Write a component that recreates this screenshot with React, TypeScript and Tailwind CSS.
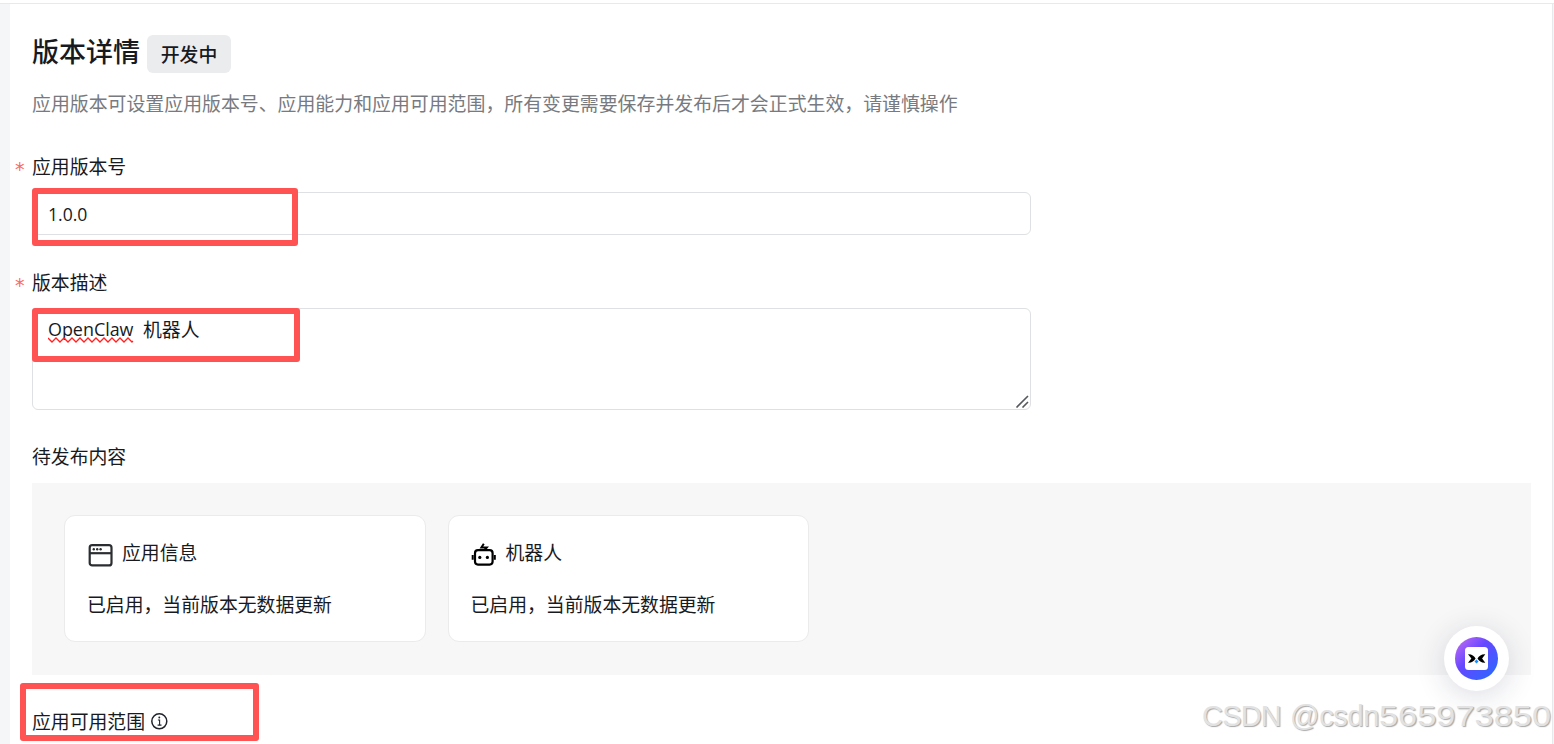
import React from 'react';

interface FieldLabelProps {
  children: React.ReactNode;
}

interface ContentCardProps {
  icon: React.ReactNode;
  title: string;
  status: string;
}

const WindowIcon = () => (
  <svg width="26" height="26" viewBox="0 0 26 26" fill="none">
    <rect x="2.7" y="3.2" width="21.8" height="20.2" rx="2.5" stroke="#2b2d31" strokeWidth="2.2" />
    <path d="M2.5 11.2h22" stroke="#2b2d31" strokeWidth="2.2" />
    <circle cx="6.8" cy="7.3" r="1.2" fill="#2b2d31" />
    <circle cx="10.2" cy="7.3" r="1.2" fill="#2b2d31" />
    <circle cx="13.6" cy="7.3" r="1.2" fill="#2b2d31" />
  </svg>
);

const RobotIcon = () => (
  <svg width="26" height="26" viewBox="0 0 26 26" fill="none">
    <path d="M12.8 1.8 10.4 5.4h5.4L13.6 8" stroke="#000" strokeWidth="2" />
    <rect x="4" y="8.2" width="17.6" height="14.4" rx="3" stroke="#000" strokeWidth="2.2" />
    <path d="M1.7 13v4.8M23.8 13v4.8" stroke="#000" strokeWidth="2" />
    <circle cx="8.8" cy="15.4" r="1.6" fill="#000" />
    <circle cx="16.4" cy="15.4" r="1.6" fill="#000" />
  </svg>
);

const InfoIcon = () => (
  <svg width="18" height="18" viewBox="0 0 18 18" fill="none">
    <circle cx="9.3" cy="9.3" r="7.5" stroke="#1f2329" strokeWidth="1.5" />
    <path d="M7.9 8h1.7v5M7.6 13.1h3.9" stroke="#1f2329" strokeWidth="1.1" />
    <circle cx="9.3" cy="5.5" r="0.95" fill="#1f2329" />
  </svg>
);

const FieldLabel: React.FC<FieldLabelProps> = ({ children }) => (
  <div className="-ml-[17px] flex h-7 items-center">
    <span className="w-[17px] pt-1.5 font-['DejaVu_Sans',sans-serif] text-[19px] leading-none text-[#f76964]">*</span>
    <span>{children}</span>
  </div>
);

const ContentCard: React.FC<ContentCardProps> = ({ icon, title, status }) => (
  <div className="h-[127px] w-[361.5px] rounded-[11px] border border-[#ebebec] bg-white px-[22px] pt-[22px]">
    <div className="flex h-7 items-center gap-[9px]">
      <span className="mt-1.5">{icon}</span>
      <span>{title}</span>
    </div>
    <div className="mt-6 h-7 leading-7">{status}</div>
  </div>
);

const AssistantButton = () => (
  <div className="absolute top-[626px] left-[1444px] flex size-[65px] items-center justify-center rounded-full bg-white shadow-[0_5px_30px_rgba(31,35,80,0.16)]">
    <svg width="43" height="43" viewBox="0 0 43 43">
      <defs>
        <linearGradient id="assistant" x1="0.1" y1="0.1" x2="0.9" y2="0.9">
          <stop offset="0" stopColor="#b565f5" />
          <stop offset="0.4" stopColor="#6548ff" />
          <stop offset="1" stopColor="#2d66ff" />
        </linearGradient>
      </defs>
      <circle cx="21.5" cy="21.5" r="21.5" fill="url(#assistant)" />
      <rect x="10" y="10" width="23" height="23" rx="3.5" fill="#fff" />
      <path d="M13 17.2c3.8-.2 6 1.5 7.6 4.3-1.6 2.8-3.8 4.4-7.6 4.2l3.4-4.2z" fill="#000" />
      <path d="M30.3 17.2c-3.8-.2-6.2 1.5-7.8 4.3 1.6 2.8 4 4.4 7.8 4.2l-3.2-4.2z" fill="#000" />
      <path d="m21.5 22.6 2 2-2 2-2-2z" fill="#168cff" />
    </svg>
  </div>
);

const App: React.FC = () => {
  return (
    <div className="relative flex h-[744px] w-[1554px] overflow-hidden bg-[#f5f6f8] font-['Noto_Sans_CJK_SC',sans-serif] text-[18.85px] text-[#171a1f]">
      <div className="absolute top-0 left-0 h-1 w-full border-b border-[#e8e9eb] bg-white" />
      <main className="mt-1 ml-[10px] w-[1543px] border-r border-[#e8e9eb] bg-white pl-[22px]">
        <header className="flex h-[69px] items-start">
          <h1 className="mt-[27px] text-[27px] leading-10 font-medium">版本详情</h1>
          <span className="mt-[31px] ml-[7px] flex h-[38px] w-[84px] items-center justify-center rounded-md bg-[#ebecee] pt-px font-medium">
            开发中
          </span>
        </header>
        <p className="mt-4 h-7 text-[18.9px] leading-7 text-[#777a80]">
          应用版本可设置应用版本号、应用能力和应用可用范围，所有变更需要保存并发布后才会正式生效，请谨慎操作
        </p>

        <section className="mt-[35px]">
          <FieldLabel>应用版本号</FieldLabel>
          <div className="mt-3 flex h-[43px] w-[999px] items-center rounded-md border border-[#dee0e3] pt-0.5 pl-[15px] font-['Open_Sans',sans-serif] text-[17.6px]">
            1.0.0
          </div>
        </section>

        <section className="mt-[33px]">
          <FieldLabel>版本描述</FieldLabel>
          <div className="relative mt-3 h-[102px] w-[999px] rounded-md border border-[#dee0e3] pt-1.5 pl-[15px]">
            <div className="flex h-7 items-center">
              <span className="relative w-[95px] font-['Open_Sans',sans-serif] text-[17.9px]">
                OpenClaw
                <svg className="absolute top-[21px] left-0" width="86" height="6" viewBox="0 0 86 6" fill="none">
                  <path
                    d="M0 1l4 4 4-4 4 4 4-4 4 4 4-4 4 4 4-4 4 4 4-4 4 4 4-4 4 4 4-4 4 4 4-4 4 4 4-4 4 4 4-4 4 4 1-1"
                    stroke="#f22"
                    strokeWidth="1.3"
                  />
                </svg>
              </span>
              <span>机器人</span>
            </div>
            <svg className="absolute right-px bottom-px" width="14" height="13" viewBox="0 0 14 13" fill="none">
              <path d="M1.5 12.5 13 1M7.5 12.5 13 7" stroke="#55585c" strokeWidth="1.6" />
            </svg>
          </div>
        </section>

        <section className="mt-8">
          <div className="h-7 leading-7">待发布内容</div>
          <div className="mt-[13px] flex h-[192px] w-[1499px] gap-[22px] bg-[#f7f7f7] pt-8 pl-8">
            <ContentCard icon={<WindowIcon />} title="应用信息" status="已启用，当前版本无数据更新" />
            <ContentCard icon={<RobotIcon />} title="机器人" status="已启用，当前版本无数据更新" />
          </div>
        </section>

        <section className="mt-8 flex h-7 items-center gap-[5px]">
          <span>应用可用范围</span>
          <InfoIcon />
        </section>
      </main>

      {/* Highlight frames */}
      <div className="absolute top-[187.5px] left-[31.5px] h-[58.5px] w-[266.5px] rounded-[3px] border-6 border-[#ff5252]" />
      <div className="absolute top-[307.5px] left-[31.5px] h-[54.5px] w-[268.5px] rounded-[3px] border-6 border-[#ff5252]" />
      <div className="absolute top-[682.5px] left-[19.5px] h-[58.5px] w-[239.5px] rounded-[3px] border-6 border-[#ff5252]" />

      <AssistantButton />

      <div className="absolute top-[698px] left-[1202px] flex font-['Liberation_Sans',sans-serif] text-[29px] leading-9 whitespace-nowrap text-[#e2e2e2] [text-shadow:1px_1px_1px_#a8a8a8]">
        <span className="w-[88px] tracking-[-0.8px]">CSDN</span>
        <span className="w-[89px] tracking-[-0.3px]">@csdn</span>
        <span className="origin-left scale-x-[1.185]">565973850</span>
      </div>
    </div>
  );
};

export default App;
